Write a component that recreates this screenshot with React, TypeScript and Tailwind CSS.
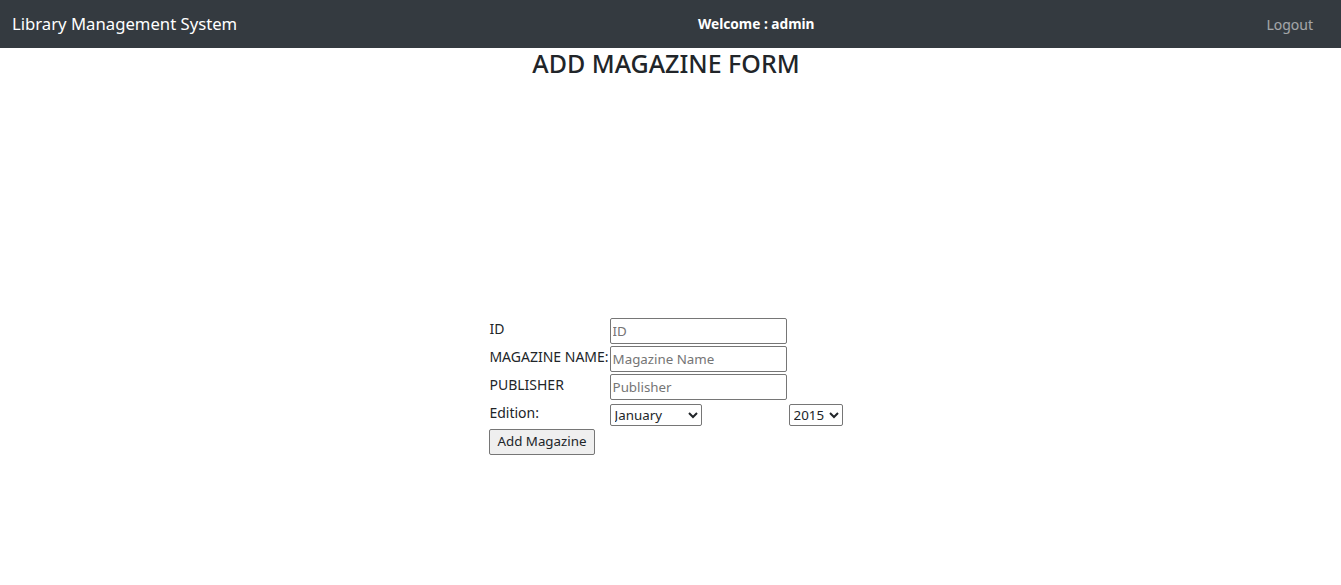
import React from 'react';

const months = ['January', 'February', 'March', 'April', 'May', 'June', 'July', 'August', 'September', 'October', 'November', 'December'];
const years = ['2015', '2016', '2017', '2018', '2019', '2020', '2021'];

export default function App() {
    return (
        <div className="min-h-screen bg-white text-[#212529] font-['Noto_Sans',sans-serif]">
            <nav className="h-12 bg-[#343a40] flex items-center px-3">
                <a className="text-white text-[16.7px] w-[686px]">Library Management System</a>
                <span className="text-white text-[13.7px] font-bold">Welcome : admin</span>
                <a className="ml-auto mr-4 text-white/55 text-[14px]">Logout</a>
            </nav>

            <div className="pr-[9px]">
                <h3 className="text-center text-[25px] font-medium leading-[1.2]">ADD MAGAZINE FORM</h3>

                <div className="flex justify-center mt-[239px]">
                    <table className="text-[14px] border-separate border-spacing-0">
                        <tbody>
                            <tr>
                                <td className="align-top p-px pr-0">ID</td>
                                <td className="p-px">
                                    <input placeholder="ID" className="w-[177px] h-[26px] border border-[#767676] rounded-[2px] px-[2px] text-[13.33px] placeholder:text-[#757575]" />
                                </td>
                                <td className="p-px"></td>
                            </tr>
                            <tr>
                                <td className="align-top p-px pr-0">MAGAZINE NAME:</td>
                                <td className="p-px">
                                    <input placeholder="Magazine Name" className="w-[177px] h-[26px] border border-[#767676] rounded-[2px] px-[2px] text-[13.33px] placeholder:text-[#757575]" />
                                </td>
                                <td className="p-px"></td>
                            </tr>
                            <tr>
                                <td className="align-top p-px pr-0">PUBLISHER</td>
                                <td className="p-px">
                                    <input placeholder="Publisher" className="w-[177px] h-[26px] border border-[#767676] rounded-[2px] px-[2px] text-[13.33px] placeholder:text-[#757575]" />
                                </td>
                                <td className="p-px"></td>
                            </tr>
                            <tr>
                                <td className="align-top p-px pr-0">Edition:</td>
                                <td className="p-px pt-[3px]">
                                    <select className="w-[92px] h-[22px] border border-[#767676] rounded-[2px] text-[13.33px] appearance-auto">
                                        {months.map((m) => <option key={m}>{m}</option>)}
                                    </select>
                                </td>
                                <td className="p-px pt-[3px]">
                                    <select className="w-[54px] h-[22px] border border-[#767676] rounded-[2px] text-[13.33px] appearance-auto">
                                        {years.map((y) => <option key={y}>{y}</option>)}
                                    </select>
                                </td>
                            </tr>
                            <tr>
                                <td className="p-px pt-[2px]" colSpan={3}>
                                    <button className="h-[26px] px-[7px] border border-[#767676] rounded-[2px] bg-[#efefef] text-[13.33px]">Add Magazine</button>
                                </td>
                            </tr>
                        </tbody>
                    </table>
                </div>
            </div>
        </div>
    );
}
